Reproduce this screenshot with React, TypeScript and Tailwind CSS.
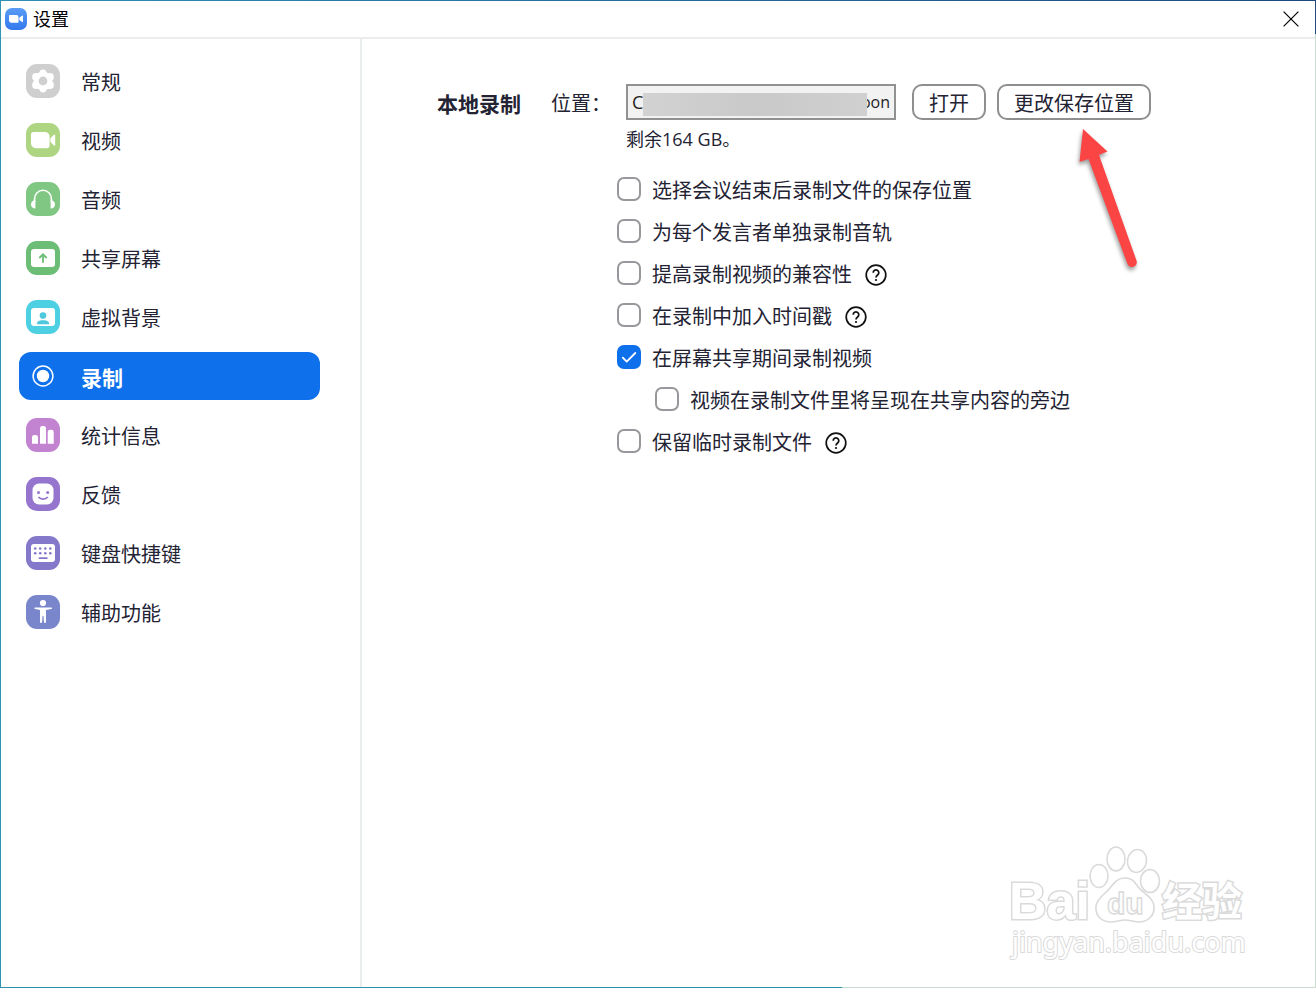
import { useState } from "react";
import type { ReactNode } from "react";

interface NavItem {
  label: string;
  color: string;
  icon: ReactNode;
}

interface OptionProps {
  label: string;
  defaultChecked?: boolean;
  help?: boolean;
  nested?: boolean;
}

const NAV_ITEMS: NavItem[] = [
  {
    label: "常规",
    color: "#cfcfcf",
    icon: (
      <>
        <g fill="#fff">
          <circle cx="17" cy="17" r="9.4" />
          <circle cx="17" cy="9" r="3.4" />
          <circle cx="17" cy="25" r="3.4" />
          <circle cx="10.1" cy="13.1" r="4" />
          <circle cx="23.9" cy="13.1" r="4" />
          <circle cx="10.1" cy="20.9" r="4" />
          <circle cx="23.9" cy="20.9" r="4" />
        </g>
        <circle cx="17" cy="17" r="4.4" fill="#cfcfcf" />
      </>
    ),
  },
  {
    label: "视频",
    color: "#aed581",
    icon: (
      <g fill="#fff">
        <path d="M7.5 9h11.5a4.6 4.6 0 0 1 4.6 4.6v9.2a2.4 2.4 0 0 1-2.4 2.4H9.8A4.8 4.8 0 0 1 5 20.4v-8.9A2.5 2.5 0 0 1 7.5 9z" />
        <path d="M24.4 15.2l3.6-3.4q1.2-1 1.2.5v9.6q0 1.5-1.2.5l-3.6-3.4z" />
      </g>
    ),
  },
  {
    label: "音频",
    color: "#81c784",
    icon: (
      <>
        <path d="M8.6 20v-3.3a8.4 8.4 0 0 1 16.8 0V20" fill="none" stroke="#fff" strokeWidth="1.6" />
        <path d="M9.4 18.2v8.3C6.5 26.5 5 24.7 5 22.3s1.5-4.1 4.4-4.1z" fill="#fff" />
        <path d="M24.6 18.2v8.3c2.9 0 4.4-1.8 4.4-4.2s-1.5-4.1-4.4-4.1z" fill="#fff" />
      </>
    ),
  },
  {
    label: "共享屏幕",
    color: "#6cbd76",
    icon: (
      <>
        <rect x="5" y="8" width="24" height="18" rx="3" fill="#fff" />
        <path d="M17 21.8v-8M13.3 17l3.7-3.7 3.7 3.7" fill="none" stroke="#6cbd76" strokeWidth="1.8" />
      </>
    ),
  },
  {
    label: "虚拟背景",
    color: "#4dd0e1",
    icon: (
      <>
        <rect x="5" y="8" width="24" height="18" rx="3" fill="#fff" />
        <circle cx="17" cy="15.6" r="3.3" fill="#4dc8dc" />
        <path d="M10.8 24.3c0-2.6 2-4 6.2-4s6.2 1.4 6.2 4z" fill="#4dc8dc" />
      </>
    ),
  },
  {
    label: "录制",
    color: "transparent",
    icon: (
      <>
        <circle cx="17" cy="17" r="9.9" fill="none" stroke="#fff" strokeWidth="1.5" />
        <circle cx="17" cy="17" r="6.2" fill="#fff" />
      </>
    ),
  },
  {
    label: "统计信息",
    color: "#c283d1",
    icon: (
      <g fill="#fff">
        <path d="M6 25.8v-6.5A2.3 2.3 0 0 1 8.3 17h1.4a2.3 2.3 0 0 1 2.3 2.3v6.5z" />
        <path d="M14 25.8V10.3A2.3 2.3 0 0 1 16.3 8h1.4a2.3 2.3 0 0 1 2.3 2.3v15.5z" />
        <path d="M21.7 25.8V14a2.3 2.3 0 0 1 2.3-2.3h1.4a2.3 2.3 0 0 1 2.3 2.3v11.8z" />
      </g>
    ),
  },
  {
    label: "反馈",
    color: "#9575cd",
    icon: (
      <>
        <rect x="6.5" y="6.5" width="21" height="21" rx="6.5" fill="#fff" />
        <circle cx="12.5" cy="15.5" r="1.5" fill="#9575cd" />
        <circle cx="21.7" cy="15.5" r="1.5" fill="#9575cd" />
        <path d="M12.4 20c2.4 2.8 7 2.8 9.4 0" fill="none" stroke="#9575cd" strokeWidth="1.6" />
      </>
    ),
  },
  {
    label: "键盘快捷键",
    color: "#8378ca",
    icon: (
      <>
        <rect x="5" y="8" width="24" height="18" rx="3" fill="#fff" />
        <g fill="#8378ca">
          {[9.2, 14.2, 19.3, 24.3].map((x) => (
            <g key={x}>
              <circle cx={x} cy="12.5" r="1.3" />
              <circle cx={x} cy="17.2" r="1.3" />
            </g>
          ))}
          <rect x="12.6" y="21.2" width="9.2" height="1.8" rx="0.9" />
        </g>
      </>
    ),
  },
  {
    label: "辅助功能",
    color: "#7986cb",
    icon: (
      <g fill="#fff">
        <circle cx="17" cy="8" r="3.1" />
        <path d="M9.3 12.4h15.8c1.3 0 1.3 1.4 0 1.7L20 15v12q0 1-1 1t-1.1-1l-.4-6h-1l-.4 6q-.1 1-1.1 1t-1-1V15l-4.7-.9c-1.3-.3-1.3-1.7 0-1.7z" />
      </g>
    ),
  },
];

const OPTIONS: OptionProps[] = [
  { label: "选择会议结束后录制文件的保存位置" },
  { label: "为每个发言者单独录制音轨" },
  { label: "提高录制视频的兼容性", help: true },
  { label: "在录制中加入时间戳", help: true },
  { label: "在屏幕共享期间录制视频", defaultChecked: true },
  { label: "视频在录制文件里将呈现在共享内容的旁边", nested: true },
  { label: "保留临时录制文件", help: true },
];

function TitleBar() {
  return (
    <header className="flex h-[38px] items-center justify-between border-b-2 border-[#ececec] pr-4 pl-1">
      <div className="flex items-center gap-1.5">
        <svg viewBox="0 0 22 22" className="size-[22px]" aria-hidden="true">
          <defs>
            <linearGradient id="app-blue" x1="0" y1="0" x2="0" y2="1">
              <stop offset="0" stopColor="#5a9cf5" />
              <stop offset="1" stopColor="#3478ee" />
            </linearGradient>
          </defs>
          <rect width="22" height="22" rx="7" fill="url(#app-blue)" />
          <path d="M4.8 7h6.6a2.2 2.2 0 0 1 2.2 2.2v4.5a1 1 0 0 1-1 1H6.1A2.1 2.1 0 0 1 4 12.6V7.8A.8.8 0 0 1 4.8 7z" fill="#fff" />
          <path d="M14.3 9.8l3-2.2q.7-.4.7.4v5.7q0 .8-.7.4l-3-2.2z" fill="#fff" />
        </svg>
        <h1 className="text-lg leading-none text-black">设置</h1>
      </div>
      <button type="button" aria-label="关闭">
        <svg viewBox="0 0 16 16" className="size-4" fill="none" stroke="#000" strokeWidth="1.2">
          <path d="M.6.6l14.8 14.8M15.4.6L.6 15.4" />
        </svg>
      </button>
    </header>
  );
}

function Sidebar() {
  const [active, setActive] = useState("录制");

  return (
    <nav className="w-[361px] shrink-0 border-r-2 border-[#ebeeee] pt-[18px] pr-10 pl-[18px]">
      <ul className="flex flex-col gap-[11px]">
        {NAV_ITEMS.map((item) => {
          const isActive = item.label === active;
          return (
            <li key={item.label}>
              <button
                type="button"
                onClick={() => setActive(item.label)}
                className={`flex h-12 w-full items-center gap-[21px] rounded-xl px-[7px] text-left ${
                  isActive ? "bg-[#0e71eb] text-[21px] font-bold text-white" : "text-xl text-[#232333]"
                }`}
              >
                <svg viewBox="0 0 34 34" className="size-[34px] shrink-0" aria-hidden="true">
                  <rect width="34" height="34" rx="11" fill={item.color} />
                  {item.icon}
                </svg>
                <span className="pt-1 leading-6">{item.label}</span>
              </button>
            </li>
          );
        })}
      </ul>
    </nav>
  );
}

function HelpButton() {
  return (
    <button type="button" aria-label="帮助" className="pt-1">
      <svg viewBox="0 0 22 22" className="size-[22px]" fill="none" stroke="#111" strokeWidth="1.7">
        <circle cx="11" cy="11" r="9.8" />
        <path d="M8.2 8.7a2.8 2.8 0 1 1 4.4 2.3c-1.1.8-1.6 1.2-1.6 2.5" />
        <circle cx="11" cy="16" r="1.1" fill="#111" stroke="none" />
      </svg>
    </button>
  );
}

function Option({ label, defaultChecked, help, nested }: OptionProps) {
  return (
    <li className={`flex h-6 items-center gap-[13px] ${nested ? "pl-[38px]" : ""}`}>
      <label className="flex items-center gap-[11px]">
        <span className="grid size-6">
          <input
            type="checkbox"
            defaultChecked={defaultChecked}
            className="peer col-start-1 row-start-1 size-6 appearance-none rounded-[7px] border-2 border-[#98989c] bg-white checked:border-[#0e71eb] checked:bg-[#0e71eb]"
          />
          <svg
            viewBox="0 0 24 24"
            className="pointer-events-none invisible col-start-1 row-start-1 size-6 peer-checked:visible"
            fill="none"
            stroke="#fff"
            strokeWidth="1.8"
            strokeLinecap="round"
            strokeLinejoin="round"
          >
            <path d="M5.8 12.6l3.9 4L18.3 8" />
          </svg>
        </span>
        <span className="pt-1 text-xl leading-6">{label}</span>
      </label>
      {help && <HelpButton />}
    </li>
  );
}

function PointerArrow() {
  return (
    <svg
      viewBox="0 0 70 150"
      className="pointer-events-none absolute top-full left-[74px] h-[150px] w-[70px] drop-shadow-[-1px_3px_2px_rgba(0,0,0,0.4)]"
      aria-hidden="true"
    >
      <path d="M12 9l24.5 22.5-8.5 3.5 37.5 105.5a4.8 4.8 0 0 1-9 3.5L17.500 39l-9 3z" fill="#fb4444" />
    </svg>
  );
}

function RecordingSettings() {
  return (
    <main className="grid flex-1 grid-cols-[114px_66px_1fr] content-start pt-[45px] pl-[75px] text-[#232333]">
      <h2 className="pt-0.5 text-[21px] leading-9 font-bold">本地录制</h2>
      <label htmlFor="save-path" className="pt-0.5 text-xl leading-9">
        位置：
      </label>
      <div>
        <div className="flex items-center pl-[9px]">
          <div className="relative w-[270px]">
            <input
              id="save-path"
              readOnly
              defaultValue="C"
              className="block h-9 w-full border-2 border-[#919191] bg-[#f2f2f2] px-1 text-lg text-[#232323] outline-none"
            />
            <span className="absolute top-1 right-1.5 text-base leading-7 text-[#232323]">oon</span>
            <span className="absolute top-[9px] right-[29px] h-[23px] w-[224px] bg-linear-to-r from-[#d2d2d2] via-[#c9c9c9] to-[#d0d0d0]" />
          </div>
          <button type="button" className="ml-4 h-9 rounded-[10px] border-2 border-[#8f8f8f] px-[15px] pt-1 text-xl leading-7">
            打开
          </button>
          <div className="relative ml-[11px]">
            <button type="button" className="block h-9 rounded-[10px] border-2 border-[#8f8f8f] px-[15px] pt-1 text-xl leading-7">
              更改保存位置
            </button>
            <PointerArrow />
          </div>
        </div>
        <p className="pt-[7px] pl-[9px] text-lg leading-6">剩余164 GB。</p>
        <ul className="mt-[26px] flex flex-col gap-[18px]">
          {OPTIONS.map((option) => (
            <Option key={option.label} {...option} />
          ))}
        </ul>
      </div>
    </main>
  );
}

function Watermark() {
  return (
    <svg
      viewBox="0 0 250 130"
      className="pointer-events-none absolute right-[64px] bottom-[18px] h-[130px] w-[250px]"
      fill="#fff"
      stroke="#dadada"
      strokeWidth="1.6"
    >
      <text x="7" y="79" fontSize="52" fontWeight="bold" strokeWidth="3" paintOrder="stroke" fontFamily="'Liberation Sans', sans-serif">
        Bai
      </text>
      <ellipse cx="97" cy="36" rx="9" ry="11.5" />
      <ellipse cx="114" cy="19" rx="9" ry="12" />
      <ellipse cx="135" cy="21" rx="9.5" ry="11.5" transform="rotate(10 135 21)" />
      <ellipse cx="148" cy="41" rx="9.5" ry="11.5" />
      <path d="M123 38c8 0 10 5 14 10 5 6 14 9 15 18 1 10-7 16-15 16-5 0-9-2-14-2s-9 2-14 2c-9 0-16-6-15-16 1-8 9-12 14-18 4-5 7-10 15-10z" />
      <text x="105" y="74" fontSize="30" fontWeight="bold" strokeWidth="1.4" fontFamily="'Liberation Sans', sans-serif">
        du
      </text>
      <text x="160" y="76" fontSize="40" fontWeight="bold" strokeWidth="3" paintOrder="stroke" fontFamily="'Noto Sans CJK SC', sans-serif">
        经验
      </text>
      <text x="10" y="112" fontSize="27" strokeWidth="2" paintOrder="stroke" fontFamily="'Noto Sans', sans-serif">
        jingyan.baidu.com
      </text>
    </svg>
  );
}

export default function App() {
  return (
    <div className="relative flex min-h-screen flex-col bg-white font-['Open_Sans','Noto_Sans_CJK_SC',sans-serif]">
      <div className="h-px bg-linear-to-r from-[#2c8fb3] to-[#1e4a80]" />
      <div className="flex flex-1">
        <div className="w-px bg-[#2f93b5]" />
        <div className="flex min-w-0 flex-1 flex-col">
          <TitleBar />
          <div className="flex flex-1">
            <Sidebar />
            <RecordingSettings />
          </div>
        </div>
        <div className="flex w-px flex-col">
          <div className="h-[33px] bg-[#1e4a80]" />
          <div className="flex-1 bg-[#c9dad0]" />
        </div>
      </div>
      <div className="flex h-px">
        <div className="w-16/25 bg-[#2b8fae]" />
        <div className="flex-1 bg-[#c9dad0]" />
      </div>
      <Watermark />
    </div>
  );
}
